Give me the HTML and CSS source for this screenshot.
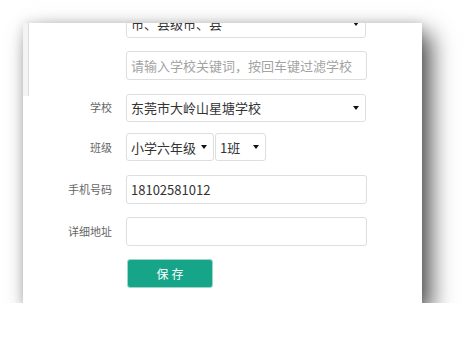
FILE: index.html
```html
<!DOCTYPE html>
<html lang="zh-CN">
<head>
  <meta charset="UTF-8">
  <title>学生信息</title>
  <link rel="stylesheet" href="styles.css">
</head>
<body>
  <div class="window">
    <div class="side-strip"></div>
    <form class="profile-form">
      <div class="form-row">
        <span class="form-label"></span>
        <div class="fake-select wide"><span class="select-text">市、县级市、县</span><span class="caret"></span></div>
      </div>
      <div class="form-row">
        <span class="form-label"></span>
        <input class="text-input" type="text" placeholder="请输入学校关键词，按回车键过滤学校">
      </div>
      <div class="form-row">
        <span class="form-label">学校</span>
        <div class="fake-select wide"><span class="select-text">东莞市大岭山星塘学校</span><span class="caret"></span></div>
      </div>
      <div class="form-row row-class">
        <span class="form-label">班级</span>
        <div class="select-pair">
          <div class="fake-select grade"><span class="select-text">小学六年级</span><span class="caret"></span></div>
          <div class="fake-select klass"><span class="select-text">1班</span><span class="caret"></span></div>
        </div>
      </div>
      <div class="form-row">
        <span class="form-label">手机号码</span>
        <input class="text-input" type="text" value="18102581012">
      </div>
      <div class="form-row">
        <span class="form-label">详细地址</span>
        <input class="text-input" type="text" value="">
      </div>
      <div class="form-row">
        <span class="form-label"></span>
        <button class="save-button" type="button">保存</button>
      </div>
    </form>
  </div>
</body>
</html>
```

FILE: styles.css
```css
* {
  margin: 0;
  padding: 0;
  box-sizing: border-box;
}

body {
  background: #fff;
  font-family: "Noto Sans CJK SC", "DejaVu Sans", sans-serif;
  color: #333;
}

.window {
  display: flex;
  align-items: flex-start;
  width: 399px;
  height: 280px;
  margin: 23px 0 0 23px;
  background: #fff;
  overflow: hidden;
  box-shadow: 0 0 10px rgba(0,0,0,0.12), 9px 11px 22px rgba(0,0,0,0.68);
}

.side-strip {
  flex: none;
  width: 6px;
  height: 73px;
  background: #f3f3f3;
  border-right: 1px solid #dcdcdc;
}

.profile-form {
  display: flex;
  flex-direction: column;
  gap: 13px;
  margin-top: -14px;
}

.form-row {
  display: flex;
  align-items: center;
  gap: 14px;
  height: 29px;
}

.row-class {
  align-items: flex-start;
  margin-top: -2px;
}

.row-class .form-label {
  margin-top: 9px;
}

.form-label {
  width: 83px;
  text-align: right;
  font-size: 11px;
  line-height: 1;
  color: #666;
}

.fake-select,
.text-input {
  position: relative;
  display: flex;
  align-items: center;
  height: 28px;
  padding: 0 4px;
  border: 1px solid #dedede;
  border-radius: 3px;
  background: #fff;
  font-family: inherit;
  font-size: 13px;
  line-height: 1;
  color: #333;
}

.fake-select.wide {
  width: 240px;
}

.text-input {
  width: 241px;
  height: 29px;
  outline: none;
}

.text-input::placeholder {
  color: #a3a3a3;
}

.select-pair {
  display: flex;
  gap: 1px;
}

.fake-select.grade {
  width: 88px;
}

.fake-select.klass {
  width: 51px;
}

.caret {
  position: absolute;
  right: 6px;
  top: 11px;
  border-left: 3px solid transparent;
  border-right: 3px solid transparent;
  border-top: 4px solid #111;
}

.save-button {
  width: 86px;
  height: 29px;
  margin-left: 1px;
  background: #17a589;
  border: 1px solid #9fd8ca;
  border-radius: 3px;
  color: #fff;
  font-family: inherit;
  font-size: 12px;
  letter-spacing: 3px;
  text-indent: 3px;
  cursor: pointer;
}
```
